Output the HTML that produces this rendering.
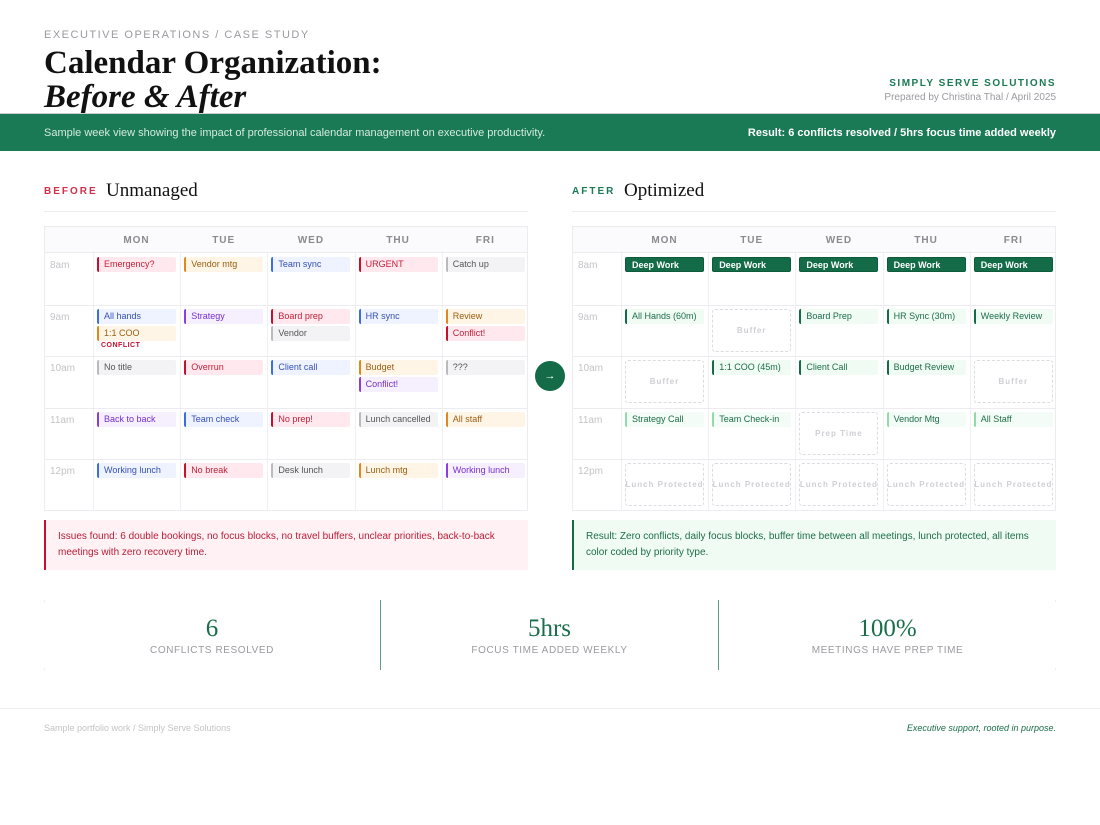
<!DOCTYPE html>
<html><head><meta charset="utf-8"><style>
*{box-sizing:border-box;margin:0;padding:0}
body{width:1100px;height:825px;background:#fff;font-family:"Liberation Sans",sans-serif;position:relative;overflow:hidden}
.abs{position:absolute}
.serif{font-family:"Liberation Serif",serif}
.grid{position:absolute;top:226px;width:484px;height:285px;border:1px solid #ececf0;background:#fff}
.hd{position:absolute;top:0;left:0;right:0;height:26px;background:#fbfafc;border-bottom:1px solid #ececf0}
.dl{position:absolute;top:8px;font-size:10px;font-weight:bold;color:#8a8a90;letter-spacing:1px;text-align:center;width:87px}
.vl{position:absolute;top:26px;bottom:0;width:1px;background:#f0eff3}
.hl{position:absolute;left:0;right:0;height:1px;background:#ececf0}
.tm{position:absolute;left:5px;font-size:10px;color:#c4c4c8}
.c{position:absolute;height:15px;font-size:9px;line-height:15px;padding-left:5px;border-left:2px solid;border-radius:2px;white-space:nowrap;overflow:hidden}
.r{background:#ffe9ee;border-color:#c8102e;color:#c0203a}
.o{background:#fff5e6;border-color:#e0881c;color:#9a5e12}
.b{background:#eef3ff;border-color:#3b6fe0;color:#3550b5}
.p{background:#f5effe;border-color:#8a3ee0;color:#7830cc}
.g{background:#f3f3f6;border-color:#bbb;color:#555}
.dw{background:#136b47;border:1px solid #0e5a3b;color:#fff;font-weight:bold;padding-left:6px}
.a{background:#f0fbf4;border-color:#136b47;color:#1d6e48}
.al{background:#f3fcf6;border-color:#8fdcaa;color:#1d6e48}
.bf{position:absolute;border:1px dashed #dcdce0;border-radius:3px;color:#cfcfd4;font-size:8px;font-weight:bold;letter-spacing:1px;display:flex;align-items:center;justify-content:center;white-space:nowrap;overflow:hidden}
</style></head><body>
<div class="abs" style="left:44px;top:29px;font-size:11px;letter-spacing:1.5px;color:#9a9aa0">EXECUTIVE OPERATIONS / CASE STUDY</div>
<div class="abs serif" style="left:44px;top:46px;font-size:33px;font-weight:bold;line-height:34px;color:#111">Calendar Organization:<br><i>Before &amp; After</i></div>
<div class="abs" style="right:44px;top:78px;font-size:10px;font-weight:bold;letter-spacing:1.5px;color:#1a7a56">SIMPLY SERVE SOLUTIONS</div>
<div class="abs" style="right:44px;top:92px;font-size:10px;color:#9a9aa0">Prepared by Christina Thal / April 2025</div>
<div class="abs" style="left:0;top:113px;width:1100px;height:38px;background:#1a7a56;border-top:1px solid #cfcfcf"></div>
<div class="abs" style="left:44px;top:127px;font-size:11px;color:#d4eadf">Sample week view showing the impact of professional calendar management on executive productivity.</div>
<div class="abs" style="right:44px;top:127px;font-size:11px;font-weight:bold;color:#fff">Result: 6 conflicts resolved / 5hrs focus time added weekly</div>

<div class="abs" style="left:44px;top:186px;font-size:10px;font-weight:bold;letter-spacing:2px;color:#d0304a">BEFORE</div>
<div class="abs serif" style="left:106px;top:180px;font-size:19px;color:#111">Unmanaged</div>
<div class="abs" style="left:44px;top:211px;width:484px;height:1px;background:#ececf0"></div>
<div class="abs" style="left:572px;top:186px;font-size:10px;font-weight:bold;letter-spacing:2px;color:#1a7a56">AFTER</div>
<div class="abs serif" style="left:624px;top:180px;font-size:19px;color:#111">Optimized</div>
<div class="abs" style="left:572px;top:211px;width:484px;height:1px;background:#ececf0"></div>

<div class="grid" style="left:44px" id="g1"></div>
<div class="grid" style="left:572px" id="g2"></div>

<div class="abs" style="left:535px;top:361px;width:30px;height:30px;border-radius:50%;background:#136b47;color:#fff;font-size:11px;line-height:30px;text-align:center">→</div>

<div class="abs" style="left:44px;top:520px;width:484px;height:50px;background:#fff1f4;border-left:2px solid #c8102e;padding:9px 12px;font-size:10px;line-height:16px;color:#b8203a">Issues found: 6 double bookings, no focus blocks, no travel buffers, unclear priorities, back-to-back meetings with zero recovery time.</div>
<div class="abs" style="left:572px;top:520px;width:484px;height:50px;background:#f0fbf4;border-left:2px solid #136b47;padding:9px 12px;font-size:10px;line-height:16px;color:#1d6e48">Result: Zero conflicts, daily focus blocks, buffer time between all meetings, lunch protected, all items color coded by priority type.</div>

<div class="abs" style="left:380px;top:600px;width:1px;height:70px;background:#5f9a82"></div>
<div class="abs" style="left:718px;top:600px;width:1px;height:70px;background:#5f9a82"></div>
<div class="abs" style="left:44px;top:600px;width:1px;height:70px;background:linear-gradient(#eee 2px,transparent 2px,transparent 68px,#eee 68px)"></div>
<div class="abs" style="left:1055px;top:600px;width:1px;height:70px;background:linear-gradient(#eee 2px,transparent 2px,transparent 68px,#eee 68px)"></div>
<div class="abs" style="left:44px;top:615px;width:336px;text-align:center"><div class="serif" style="font-size:25px;line-height:28px;color:#1a6e4a">6</div><div style="font-size:10px;letter-spacing:.6px;color:#9a9aa0;margin-top:2px">CONFLICTS RESOLVED</div></div>
<div class="abs" style="left:381px;top:615px;width:337px;text-align:center"><div class="serif" style="font-size:25px;line-height:28px;color:#1a6e4a">5hrs</div><div style="font-size:10px;letter-spacing:.6px;color:#9a9aa0;margin-top:2px">FOCUS TIME ADDED WEEKLY</div></div>
<div class="abs" style="left:719px;top:615px;width:337px;text-align:center"><div class="serif" style="font-size:25px;line-height:28px;color:#1a6e4a">100%</div><div style="font-size:10px;letter-spacing:.6px;color:#9a9aa0;margin-top:2px">MEETINGS HAVE PREP TIME</div></div>

<div class="abs" style="left:0;top:708px;width:1100px;height:1px;background:#efeff2"></div>
<div class="abs" style="left:44px;top:723px;font-size:9px;color:#c4c4c8">Sample portfolio work / Simply Serve Solutions</div>
<div class="abs" style="right:44px;top:723px;font-size:9px;font-style:italic;color:#1a6e4a">Executive support, rooted in purpose.</div>

<script>
function build(id,evs,bufs){
 var g=document.getElementById(id),h='<div class="hd"></div>';
 var days=['MON','TUE','WED','THU','FRI'],times=['8am','9am','10am','11am','12pm'];
 for(var i=0;i<5;i++){var x=48+i*87.2;h+='<div class="dl" style="left:'+x+'px">'+days[i]+'</div><div class="vl" style="left:'+x+'px"></div>';}
 for(var j=0;j<5;j++){var y=26+j*51.5;if(j>0)h+='<div class="hl" style="top:'+y+'px"></div>';h+='<div class="tm" style="top:'+(y+7)+'px">'+times[j]+'</div>';}
 evs.forEach(function(e){var x=48+e[0]*87.2+4,y=26+e[1]*51.5+4+(e[2]||0)*17;h+='<div class="c '+e[3]+'" style="left:'+x+'px;top:'+y+'px;width:79px">'+e[4]+'</div>';});
 (bufs||[]).forEach(function(b){var x=48+b[0]*87.2+4,y=26+b[1]*51.5+4;h+='<div class="bf" style="left:'+x+'px;top:'+y+'px;width:79px;height:43px">'+b[2]+'</div>';});
 g.innerHTML=h;
}
build('g1',[[0,0,0,'r','Emergency?'],[1,0,0,'o','Vendor mtg'],[2,0,0,'b','Team sync'],[3,0,0,'r','URGENT'],[4,0,0,'g','Catch up'],
[0,1,0,'b','All hands'],[0,1,1,'o','1:1 COO'],[1,1,0,'p','Strategy'],[2,1,0,'r','Board prep'],[2,1,1,'g','Vendor'],[3,1,0,'b','HR sync'],[4,1,0,'o','Review'],[4,1,1,'r','Conflict!'],
[0,2,0,'g','No title'],[1,2,0,'r','Overrun'],[2,2,0,'b','Client call'],[3,2,0,'o','Budget'],[3,2,1,'p','Conflict!'],[4,2,0,'g','???'],
[0,3,0,'p','Back to back'],[1,3,0,'b','Team check'],[2,3,0,'r','No prep!'],[3,3,0,'g','Lunch cancelled'],[4,3,0,'o','All staff'],
[0,4,0,'b','Working lunch'],[1,4,0,'r','No break'],[2,4,0,'g','Desk lunch'],[3,4,0,'o','Lunch mtg'],[4,4,0,'p','Working lunch']]);
document.getElementById('g1').insertAdjacentHTML('beforeend','<div class="abs" style="left:56px;top:115px;font-size:7px;font-weight:bold;letter-spacing:.5px;color:#c8102e">CONFLICT</div>');
build('g2',[[0,0,0,'dw','Deep Work'],[1,0,0,'dw','Deep Work'],[2,0,0,'dw','Deep Work'],[3,0,0,'dw','Deep Work'],[4,0,0,'dw','Deep Work'],
[0,1,0,'a','All Hands (60m)'],[2,1,0,'a','Board Prep'],[3,1,0,'a','HR Sync (30m)'],[4,1,0,'a','Weekly Review'],
[1,2,0,'a','1:1 COO (45m)'],[2,2,0,'a','Client Call'],[3,2,0,'a','Budget Review'],
[0,3,0,'al','Strategy Call'],[1,3,0,'al','Team Check-in'],[3,3,0,'al','Vendor Mtg'],[4,3,0,'al','All Staff']],
[[1,1,'Buffer'],[0,2,'Buffer'],[4,2,'Buffer'],[2,3,'Prep Time'],[0,4,'Lunch Protected'],[1,4,'Lunch Protected'],[2,4,'Lunch Protected'],[3,4,'Lunch Protected'],[4,4,'Lunch Protected']]);
</script>
</body></html>
